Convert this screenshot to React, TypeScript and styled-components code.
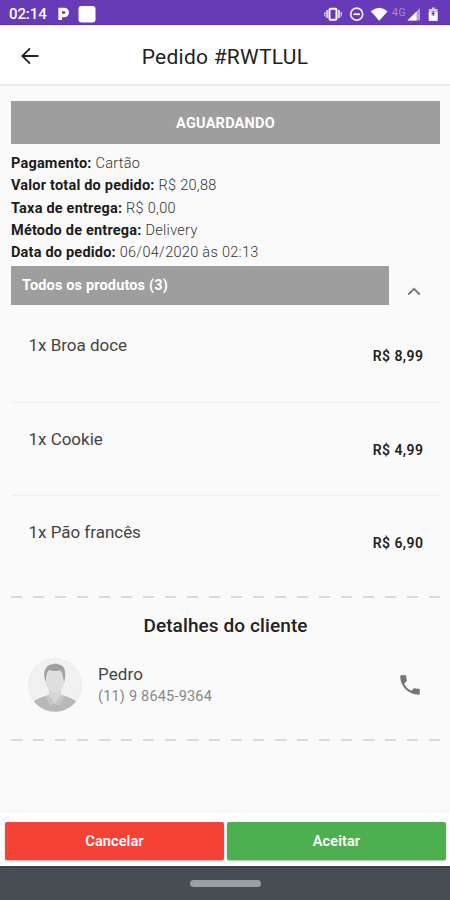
import React from "react";
import styled, { createGlobalStyle } from "styled-components";

const GlobalStyle = createGlobalStyle`
  * { box-sizing: border-box; }
  body { margin: 0; background: #fafafa; font-family: Roboto, "Liberation Sans", sans-serif; }
`;

const Screen = styled.div`
  width: 450px;
  height: 900px;
  display: flex;
  flex-direction: column;
  overflow: hidden;
  background: #fafafa;
  color: #222;
`;

const StatusBar = styled.div`
  height: 25px;
  flex: none;
  display: flex;
  align-items: center;
  justify-content: space-between;
  padding: 3px 8px 0 9px;
  background: #673ab7;
  border-bottom: 1px solid #5e2db0;
  color: #fff;
`;

const StatusGroup = styled.div`
  display: flex;
  align-items: center;
`;

const Clock = styled.span`
  width: 49px;
  font-size: 15px;
  font-weight: 500;
  letter-spacing: -0.1px;
`;

const Header = styled.header`
  height: 61px;
  flex: none;
  display: grid;
  grid-template-columns: 60px 1fr 60px;
  align-items: center;
  background: #fff;
  border-bottom: 2px solid #ececec;
`;

const BackButton = styled.button`
  border: 0;
  padding: 2px 0 0;
  height: 30px;
  background: none;
  display: flex;
  align-items: center;
  justify-content: center;
`;

const Title = styled.h1`
  margin: 4px 0 0;
  font-size: 21px;
  font-weight: 400;
  line-height: 28px;
  letter-spacing: 0.24px;
  text-align: center;
  white-space: nowrap;
`;

const Content = styled.main`
  flex: 1;
  min-height: 0;
  padding: 15px 10px 0 11px;
`;

const Banner = styled.div`
  height: 43px;
  display: flex;
  align-items: center;
  justify-content: center;
  padding-top: 2px;
  background: #9e9e9e;
  color: #fff;
  font-size: 14.5px;
  font-weight: 700;
  letter-spacing: 0.22px;
`;

const InfoList = styled.div`
  padding-top: 9px;
  height: 122px;
`;

const InfoLine = styled.p`
  margin: 0;
  height: 22.3px;
  line-height: 22.3px;
  font-size: 14.5px;
  letter-spacing: 0.3px;
  font-weight: 300;
  white-space: nowrap;
  color: #333;
  b { font-weight: 700; letter-spacing: 0.2px; color: #1c1c1c; }
`;

const Section = styled.div`
  height: 38px;
  display: grid;
  grid-template-columns: 378px 51px;
`;

const SectionTitle = styled.div`
  padding-left: 11px;
  line-height: 39px;
  background: #9e9e9e;
  color: #fff;
  font-size: 14.5px;
  font-weight: 700;
  letter-spacing: 0.15px;
`;

const Toggle = styled.div`
  display: flex;
  align-items: center;
  justify-content: center;
  padding: 11px 1px 0 0;
`;

const Product = styled.div<{ $last?: boolean }>`
  height: ${(p) => (p.$last ? "92px" : "93.5px")};
  display: flex;
  justify-content: space-between;
  padding: 25px 16.5px 0 17.5px;
  border-bottom: ${(p) => (p.$last ? "0" : "1px solid #efefef")};
`;

const ProductName = styled.span`
  font-size: 17px;
  line-height: 22px;
  letter-spacing: -0.02px;
  color: #444;
`;

const Price = styled.span`
  margin-top: 11px;
  font-size: 14px;
  line-height: 22px;
  font-weight: 600;
  letter-spacing: 0.45px;
`;

const Products = styled.div`
  padding-top: 5px;
  height: 292px;
`;

const Dashes = styled.div`
  height: 2px;
  background: repeating-linear-gradient(90deg, #dadada 0 11px, transparent 11px 22px);
`;

const Customer = styled.section`
  height: 140.5px;
  padding-top: 15px;
`;

const CustomerHeading = styled.h2`
  margin: 0;
  font-size: 19px;
  line-height: 26px;
  font-weight: 500;
  letter-spacing: 0.1px;
  text-align: center;
`;

const CustomerRow = styled.div`
  display: grid;
  grid-template-columns: 54px 1fr 24px;
  column-gap: 16px;
  align-items: center;
  padding: 19px 19px 0 17px;
`;

const CustomerName = styled.div`
  font-size: 17px;
  line-height: 22px;
  letter-spacing: 0.1px;
  color: #444;
`;

const CustomerPhone = styled.div`
  padding-top: 1px;
  font-size: 14.5px;
  line-height: 22px;
  letter-spacing: 0.2px;
  color: #888;
`;

const Actions = styled.footer`
  height: 53px;
  flex: none;
  display: grid;
  grid-template-columns: 1fr 1fr;
  gap: 3px;
  padding: 9px 4px 6px 5px;
  background: #fff;
`;

const ActionButton = styled.button<{ $color: string }>`
  border: 0;
  border-radius: 2px;
  padding: 1px 0 0;
  background: ${(p) => p.$color};
  color: #fff;
  font: 600 14.5px Roboto, "Liberation Sans", sans-serif;
  letter-spacing: 0.1px;
  box-shadow: 0 1px 2px rgba(0, 0, 0, 0.3);
`;

const NavBar = styled.div`
  height: 34px;
  flex: none;
  display: flex;
  justify-content: center;
  padding-top: 12px;
  background: #464d53;
  border-top: 2px solid #394247;
`;

const NavPill = styled.div`
  width: 71px;
  height: 7px;
  border-radius: 4px;
  background: #9b9fa2;
`;

const info = [
  ["Pagamento:", "Cartão"],
  ["Valor total do pedido:", "R$ 20,88"],
  ["Taxa de entrega:", "R$ 0,00"],
  ["Método de entrega:", "Delivery"],
  ["Data do pedido:", "06/04/2020 às 02:13"],
];

const products = [
  ["1x Broa doce", "R$ 8,99"],
  ["1x Cookie", "R$ 4,99"],
  ["1x Pão francês", "R$ 6,90"],
];

const NotificationIcons = () => (
  <svg width="40" height="18" viewBox="0 0 40 18" fill="none">
    <path d="M2.200 15V4.500H6.200a2.900 2.900 0 0 1 0 6H3" stroke="#fff" strokeWidth="3.600" />
    <rect x="20.500" y="1" width="17" height="16.500" rx="3" fill="#fff" />
  </svg>
);

const SystemIcons = () => (
  <svg width="118" height="18" viewBox="0 0 118 18" fill="none">
    <rect x="5.500" y="3.800" width="7" height="11" rx="1" stroke="#fff" strokeWidth="2" />
    <path d="M3.200 5v8M15 5v8" stroke="#d8ccec" strokeWidth="2" />
    <path d="M.9 7v4.500M17.200 7v4.500" stroke="#d8ccec" strokeWidth="1.300" />
    <circle cx="32.700" cy="9.200" r="6" stroke="#f0ebf7" strokeWidth="1.700" />
    <path d="M29.500 9.200h6.400" stroke="#fff" strokeWidth="1.800" />
    <path d="M46.800 6.200Q55.200-.8 63.700 6.200L55.200 15.800Z" fill="#fff" />
    <text x="68" y="10.500" fontSize="10.500" fill="#a98ad8" fontFamily="Roboto" letterSpacing=".6">4G</text>
    <path d="M83.500 15.600 96 3v12.600Z" fill="#b59adc" />
    <path d="M83.500 15.600 92.500 6.600v9Z" fill="#fff" />
    <path d="M107.800 2.500h3V4h2.700v11.800h-8.700V4h3Z" fill="#d8ccec" />
    <path d="M104.800 7h2.400v4h4V7h2.300v8.800h-8.700Z" fill="#fff" />
    <path d="M109.200 6v4.500M107.700 8.500h3" stroke="#673ab7" strokeWidth="1.200" />
  </svg>
);

const Avatar = () => (
  <svg width="54" height="54" viewBox="0 0 54 54">
    <defs>
      <clipPath id="avatar"><circle cx="27" cy="27" r="26.700" /></clipPath>
    </defs>
    <circle cx="27" cy="27" r="26.500" fill="#f1f1f1" stroke="#e9e9e9" strokeWidth=".7" />
    <g clipPath="url(#avatar)">
      <path d="M5 44Q9 40 21 37l6 9 6-9q12 3 16 7v11H5Z" fill="#b8b8b8" />
      <path d="M21 29h12v8q0 3-6 9-6-6-6-9Z" fill="#d6d6d6" />
      <path d="m20.500 36.500 6.500 9-4.500 2.500-5-9.500ZM33.500 36.500 27 45.500l4.500 2.500 5-9.500Z" fill="#c6c6c6" />
      <path d="M17.500 15q0-6 9.500-6t9.500 6v8q0 4-3 8-3 4-6.500 4t-6.500-4q-3-4-3-8Z" fill="#dedede" />
      <path d="M17.500 24q-3-9 .5-14 2-3.500 7-3.700 3-1.600 5 0 6 .7 7 6.700 1 5-.8 11l-1.200-5q0-4-2.500-6.500-6 1-11.500-.5-2.500 2.500-2.800 6.500Z" fill="#a0a0a0" />
    </g>
  </svg>
);

export default function App() {
  return (
    <Screen>
      <GlobalStyle />
      <StatusBar>
        <StatusGroup>
          <Clock>02:14</Clock>
          <NotificationIcons />
        </StatusGroup>
        <SystemIcons />
      </StatusBar>
      <Header>
        <BackButton aria-label="Voltar">
          <svg width="20" height="20" viewBox="0 0 20 20" fill="none" stroke="#222" strokeWidth="1.800">
            <path d="M18.500 10H2.500M10 2.300 2.300 10l7.700 7.700" />
          </svg>
        </BackButton>
        <Title>Pedido #RWTLUL</Title>
      </Header>
      <Content>
        <Banner>AGUARDANDO</Banner>
        <InfoList>
          {info.map(([label, value]) => (
            <InfoLine key={label}><b>{label}</b> {value}</InfoLine>
          ))}
        </InfoList>
        <Section>
          <SectionTitle>Todos os produtos (3)</SectionTitle>
          <Toggle>
            <svg width="14" height="9" viewBox="0 0 14 9" fill="none" stroke="#777" strokeWidth="1.900">
              <path d="m1.300 7.500 5.700-5.600 5.700 5.600" />
            </svg>
          </Toggle>
        </Section>
        <Products>
          {products.map(([name, price], i) => (
            <Product key={name} $last={i === products.length - 1}>
              <ProductName>{name}</ProductName>
              <Price>{price}</Price>
            </Product>
          ))}
        </Products>
        <Dashes />
        <Customer>
          <CustomerHeading>Detalhes do cliente</CustomerHeading>
          <CustomerRow>
            <Avatar />
            <div>
              <CustomerName>Pedro</CustomerName>
              <CustomerPhone>(11) 9 8645-9364</CustomerPhone>
            </div>
            <svg width="26" height="26" viewBox="0 0 24 24" fill="#757575">
              <path d="M6.620 10.790c1.440 2.830 3.760 5.140 6.590 6.590l2.200-2.200c.27-.27.67-.36 1.020-.24 1.120.37 2.330.57 3.570.57.55 0 1 .45 1 1V20c0 .55-.45 1-1 1-9.390 0-17-7.610-17-17 0-.55.45-1 1-1h3.500c.55 0 1 .45 1 1 0 1.250.2 2.450.57 3.570.11.35.03.74-.25 1.020l-2.200 2.200z" />
            </svg>
          </CustomerRow>
        </Customer>
        <Dashes />
      </Content>
      <Actions>
        <ActionButton $color="#f44336">Cancelar</ActionButton>
        <ActionButton $color="#4caf50">Aceitar</ActionButton>
      </Actions>
      <NavBar><NavPill /></NavBar>
    </Screen>
  );
}
